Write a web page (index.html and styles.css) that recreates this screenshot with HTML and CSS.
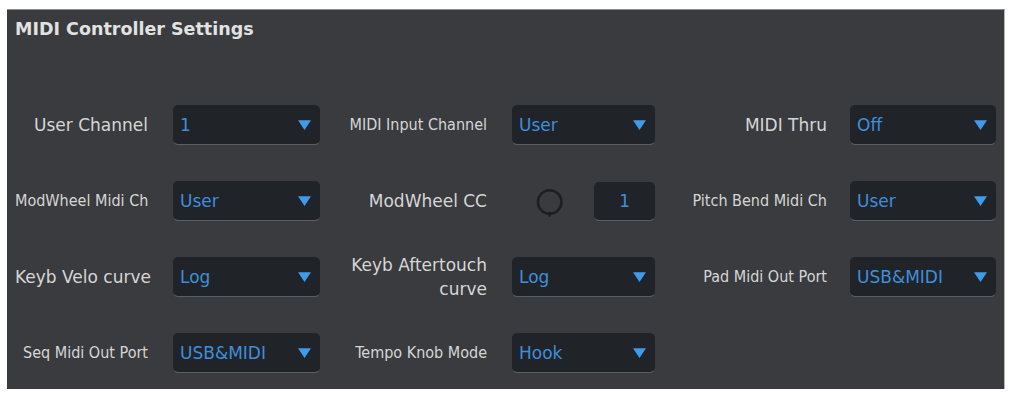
FILE: index.html
```html
<!DOCTYPE html>
<html>
<head>
<meta charset="utf-8">
<link rel="stylesheet" href="styles.css">
</head>
<body>
<div class="panel">
  <div class="title">MIDI Controller Settings</div>
  <div class="grid">
    <div class="label">User Channel</div>
    <div class="select"><span class="val">1</span><svg class="tri" viewBox="0 0 12 9"><path d="M0 0H12L6 9Z"/></svg></div>
    <div class="label cond">MIDI Input Channel</div>
    <div class="select"><span class="val">User</span><svg class="tri" viewBox="0 0 12 9"><path d="M0 0H12L6 9Z"/></svg></div>
    <div class="label">MIDI Thru</div>
    <div class="select"><span class="val">Off</span><svg class="tri" viewBox="0 0 12 9"><path d="M0 0H12L6 9Z"/></svg></div>

    <div class="label cond">ModWheel Midi Ch</div>
    <div class="select"><span class="val">User</span><svg class="tri" viewBox="0 0 12 9"><path d="M0 0H12L6 9Z"/></svg></div>
    <div class="label">ModWheel CC</div>
    <div class="knobcell">
      <svg class="knob" viewBox="0 0 30 32"><circle cx="15" cy="15" r="12" fill="none" stroke="#1c1e21" stroke-width="2.5"/><line x1="15" y1="25" x2="15" y2="30" stroke="#1c1e21" stroke-width="2.5"/></svg>
      <div class="numbox">1</div>
    </div>
    <div class="label cond">Pitch Bend Midi Ch</div>
    <div class="select"><span class="val">User</span><svg class="tri" viewBox="0 0 12 9"><path d="M0 0H12L6 9Z"/></svg></div>

    <div class="label">Keyb Velo curve</div>
    <div class="select"><span class="val">Log</span><svg class="tri" viewBox="0 0 12 9"><path d="M0 0H12L6 9Z"/></svg></div>
    <div class="label two">Keyb Aftertouch<br>curve</div>
    <div class="select"><span class="val">Log</span><svg class="tri" viewBox="0 0 12 9"><path d="M0 0H12L6 9Z"/></svg></div>
    <div class="label cond">Pad Midi Out Port</div>
    <div class="select"><span class="val">USB&amp;MIDI</span><svg class="tri" viewBox="0 0 12 9"><path d="M0 0H12L6 9Z"/></svg></div>

    <div class="label cond">Seq Midi Out Port</div>
    <div class="select"><span class="val">USB&amp;MIDI</span><svg class="tri" viewBox="0 0 12 9"><path d="M0 0H12L6 9Z"/></svg></div>
    <div class="label cond">Tempo Knob Mode</div>
    <div class="select"><span class="val">Hook</span><svg class="tri" viewBox="0 0 12 9"><path d="M0 0H12L6 9Z"/></svg></div>
  </div>
</div>
</body>
</html>
```
FILE: styles.css
```css
html, body {
  margin: 0;
  padding: 0;
  background: #ffffff;
}
body {
  width: 1012px;
  height: 393px;
  overflow: hidden;
  font-family: "DejaVu Sans", "Liberation Sans", sans-serif;
}
.panel {
  margin: 9px 0 0 7px;
  width: 998px;
  height: 380px;
  box-sizing: border-box;
  background: #393b3e;
  border-top: 1px solid #8a8c8e;
  border-right: 1px solid #b5b7b9;
  padding: 9px 0 0 8px;
}
.title {
  color: #e2e2e2;
  font-weight: bold;
  font-size: 17.5px;
  line-height: 20px;
  height: 20px;
}
.grid {
  margin-top: 66px;
  display: grid;
  grid-template-columns: 158px 147px 192px 143px 195px 146px;
  grid-auto-rows: 39px;
  row-gap: 37px;
  align-items: center;
}
.label {
  color: #d6d6d6;
  font-size: 17px;
  text-align: right;
  padding-right: 25px;
  white-space: nowrap;
}
.label:nth-child(6n+5) {
  padding-right: 23px;
}
.label.cond {
  font-family: "Liberation Sans Narrow", "DejaVu Sans Condensed", "DejaVu Sans", sans-serif;
  font-size: 16px;
  letter-spacing: 0;
}
.label.two {
  line-height: 24px;
}
.select {
  height: 39px;
  box-sizing: border-box;
  background: #202328;
  border-radius: 5px;
  box-shadow: 0 2px 0 -1px #5c5f62;
  display: flex;
  align-items: center;
  justify-content: space-between;
  padding: 0 9px 0 7px;
}
.val {
  color: #3f8fda;
  font-size: 17px;
}
.tri {
  width: 13px;
  height: 10px;
  fill: #3f9bec;
}
.knobcell {
  display: flex;
  align-items: center;
  height: 39px;
}
.knob {
  width: 30px;
  height: 32px;
  margin-left: 23px;
  margin-top: 4px;
}
.numbox {
  margin-left: 30px;
  width: 62px;
  height: 38px;
  background: #202328;
  border-radius: 5px;
  box-shadow: 0 2px 0 -1px #5c5f62;
  color: #3f8fda;
  font-size: 17px;
  display: flex;
  align-items: center;
  justify-content: center;
}
```
